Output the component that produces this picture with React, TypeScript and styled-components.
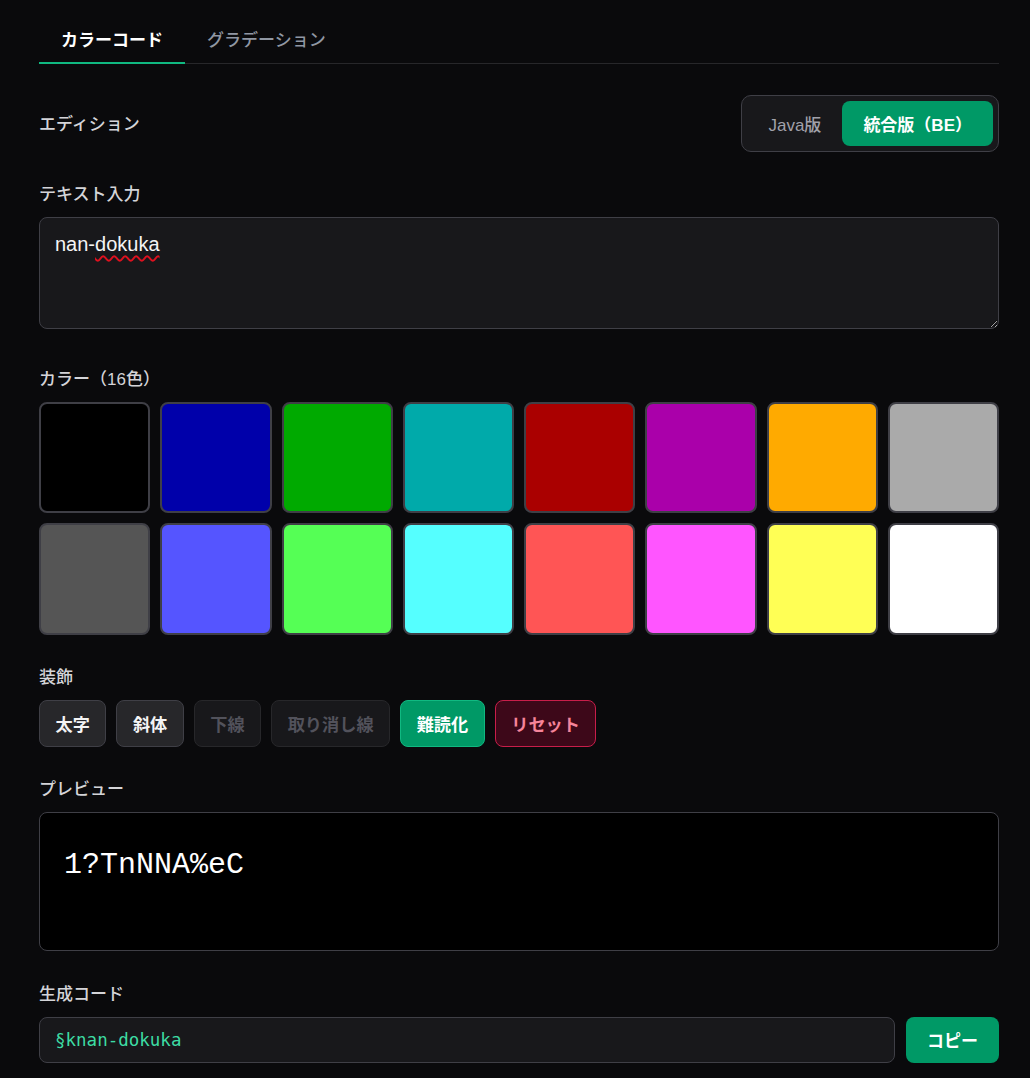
import styled, { createGlobalStyle } from 'styled-components';

const GlobalStyle = createGlobalStyle`
  html, body {
    margin: 0;
    padding: 0;
    background: #0a0a0c;
  }
  body {
    font-family: "Liberation Sans", "Noto Sans CJK JP", sans-serif;
    color: #e4e4e7;
  }
  * {
    box-sizing: border-box;
  }
`;

const Page = styled.div`
  width: 1030px;
  padding: 16px 31px 14px 39px;
  display: flex;
  flex-direction: column;
`;

const TabBar = styled.div`
  display: flex;
  border-bottom: 1px solid #27272a;
`;

const Tab = styled.button<{ $active?: boolean }>`
  font-family: inherit;
  font-size: 17px;
  line-height: 24px;
  font-weight: ${(p) => (p.$active ? 700 : 500)};
  color: ${(p) => (p.$active ? '#ffffff' : '#9097a3')};
  background: none;
  border: none;
  border-bottom: 2px solid ${(p) => (p.$active ? '#10b981' : 'transparent')};
  margin-bottom: -1px;
  padding: 13px 22px 9px;
  cursor: pointer;
`;

const Section = styled.section<{ $gap?: number }>`
  margin-top: ${(p) => p.$gap ?? 29}px;
  display: flex;
  flex-direction: column;
`;

const EditionRow = styled.div`
  margin-top: 31px;
  display: flex;
  align-items: center;
  justify-content: space-between;
`;

const Label = styled.div<{ $flush?: boolean }>`
  font-size: 17px;
  line-height: 24px;
  font-weight: 500;
  color: #d4d4d8;
  padding-top: 2px;
  margin-bottom: ${(p) => (p.$flush ? '0' : '10px')};
`;

const Toggle = styled.div`
  display: flex;
  padding: 5px;
  background: #18181b;
  border: 1px solid #3f3f46;
  border-radius: 10px;
`;

const ToggleButton = styled.button<{ $active?: boolean }>`
  font-family: inherit;
  font-size: 17px;
  font-weight: ${(p) => (p.$active ? 700 : 500)};
  height: 45px;
  padding: 0 21px;
  border: none;
  border-radius: 8px;
  background: ${(p) => (p.$active ? '#009966' : 'transparent')};
  color: ${(p) => (p.$active ? '#ffffff' : '#a1a1aa')};
  cursor: pointer;
`;

const TextBox = styled.div`
  height: 112px;
  margin-bottom: 8px;
  padding: 14px 15px;
  background: #18181b;
  border: 1px solid #3f3f46;
  border-radius: 8px;
  font-size: 20px;
  line-height: 24px;
  color: #f4f4f5;
  overflow: auto;
  resize: both;
`;

const Misspelled = styled.span`
  text-decoration: underline wavy #e0101e;
  text-decoration-thickness: 1.5px;
  text-underline-offset: 4px;
`;

const SwatchGrid = styled.div`
  display: grid;
  grid-template-columns: repeat(8, 1fr);
  gap: 10px;
`;

const Swatch = styled.button<{ $color: string }>`
  aspect-ratio: 1 / 1;
  background: ${(p) => p.$color};
  border: 2px solid #3f3f46;
  border-radius: 8px;
  padding: 0;
  cursor: pointer;
`;

const ButtonRow = styled.div`
  display: flex;
  gap: 10px;
`;

type Tone = 'on' | 'off' | 'accent' | 'danger';

const toneStyles: Record<Tone, { bg: string; border: string; color: string }> = {
  on: { bg: '#27272a', border: '#3f3f46', color: '#f4f4f5' },
  off: { bg: '#18181b', border: '#27272a', color: '#52525b' },
  accent: { bg: '#009966', border: '#10b981', color: '#ffffff' },
  danger: { bg: '#3d0819', border: '#c81e4a', color: '#f5849a' },
};

const DecoButton = styled.button<{ $tone: Tone }>`
  font-family: inherit;
  font-size: 17.2px;
  font-weight: 700;
  height: 47px;
  padding: 0 15.5px;
  border-radius: 8px;
  border: 1px solid ${(p) => toneStyles[p.$tone].border};
  background: ${(p) => toneStyles[p.$tone].bg};
  color: ${(p) => toneStyles[p.$tone].color};
  cursor: pointer;
`;

const Preview = styled.div`
  height: 139px;
  padding: 24px 24px;
  background: #000000;
  border: 1px solid #3f3f46;
  border-radius: 8px;
  font-family: "Liberation Mono", monospace;
  font-size: 30px;
  line-height: 56px;
  color: #ffffff;
`;

const CodeRow = styled.div`
  display: flex;
  gap: 11px;
`;

const CodeField = styled.div`
  flex: 1;
  height: 46px;
  display: flex;
  align-items: center;
  padding: 0 15px;
  background: #18181b;
  border: 1px solid #3f3f46;
  border-radius: 8px;
  font-family: "DejaVu Sans Mono", monospace;
  font-size: 17.5px;
  color: #3ddca4;
`;

const CopyButton = styled.button`
  font-family: inherit;
  font-size: 17px;
  font-weight: 700;
  width: 93px;
  height: 46px;
  border: none;
  border-radius: 8px;
  background: #009966;
  color: #ffffff;
  cursor: pointer;
`;

const COLORS = [
  '#000000', '#0000AA', '#00AA00', '#00AAAA', '#AA0000', '#AA00AA', '#FFAA00', '#AAAAAA',
  '#555555', '#5555FF', '#55FF55', '#55FFFF', '#FF5555', '#FF55FF', '#FFFF55', '#FFFFFF',
];

const DECORATIONS: { label: string; tone: Tone }[] = [
  { label: '太字', tone: 'on' },
  { label: '斜体', tone: 'on' },
  { label: '下線', tone: 'off' },
  { label: '取り消し線', tone: 'off' },
  { label: '難読化', tone: 'accent' },
  { label: 'リセット', tone: 'danger' },
];

export default function App() {
  return (
    <>
      <GlobalStyle />
      <Page>
        <TabBar>
          <Tab $active>カラーコード</Tab>
          <Tab>グラデーション</Tab>
        </TabBar>

        <EditionRow>
          <Label $flush>エディション</Label>
          <Toggle>
            <ToggleButton>Java版</ToggleButton>
            <ToggleButton $active>統合版（BE）</ToggleButton>
          </Toggle>
        </EditionRow>

        <Section>
          <Label>テキスト入力</Label>
          <TextBox>
            nan-<Misspelled>dokuka</Misspelled>
          </TextBox>
        </Section>

        <Section>
          <Label>カラー（16色）</Label>
          <SwatchGrid>
            {COLORS.map((c) => (
              <Swatch key={c} $color={c} aria-label={c} />
            ))}
          </SwatchGrid>
        </Section>

        <Section>
          <Label>装飾</Label>
          <ButtonRow>
            {DECORATIONS.map((d) => (
              <DecoButton key={d.label} $tone={d.tone}>
                {d.label}
              </DecoButton>
            ))}
          </ButtonRow>
        </Section>

        <Section>
          <Label>プレビュー</Label>
          <Preview>1?TnNNA%eC</Preview>
        </Section>

        <Section $gap={30}>
          <Label>生成コード</Label>
          <CodeRow>
            <CodeField>§knan-dokuka</CodeField>
            <CopyButton>コピー</CopyButton>
          </CodeRow>
        </Section>
      </Page>
    </>
  );
}
